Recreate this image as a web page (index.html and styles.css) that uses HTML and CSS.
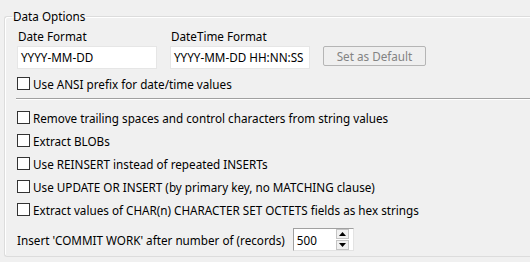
FILE: index.html
```html
<!DOCTYPE html>
<html lang="en">
<head>
    <meta charset="UTF-8">
    <title>Data Options</title>
    <link rel="stylesheet" href="styles.css">
</head>
<body>
    <fieldset class="group">
        <legend>Data Options</legend>

        <div class="format-row">
            <div class="field">
                <label class="field-label">Date Format</label>
                <div class="edit">YYYY-MM-DD</div>
            </div>
            <div class="field">
                <label class="field-label">DateTime Format</label>
                <div class="edit">YYYY-MM-DD HH:NN:SS</div>
            </div>
            <button class="push-button" disabled>Set as Default</button>
        </div>

        <div class="check-row"><span class="check"></span>Use ANSI prefix for date/time values</div>

        <div class="separator"></div>

        <div class="check-list">
            <div class="check-row"><span class="check"></span>Remove trailing spaces and control characters from string values</div>
            <div class="check-row"><span class="check"></span>Extract BLOBs</div>
            <div class="check-row"><span class="check"></span>Use REINSERT instead of repeated INSERTs</div>
            <div class="check-row"><span class="check"></span>Use UPDATE OR INSERT (by primary key, no MATCHING clause)</div>
            <div class="check-row"><span class="check"></span>Extract values of CHAR(n) CHARACTER SET OCTETS fields as hex strings</div>
        </div>

        <div class="commit-row">
            <span>Insert 'COMMIT WORK' after number of (records)</span>
            <div class="spin">
                <span class="spin-value">500</span>
                <div class="spin-buttons">
                    <span class="spin-btn"><svg width="7" height="4" viewBox="0 0 7 4"><path d="M3.5 0L7 4H0z" fill="#000"/></svg></span>
                    <span class="spin-btn"><svg width="7" height="4" viewBox="0 0 7 4"><path d="M0 0H7L3.5 4z" fill="#000"/></svg></span>
                </div>
            </div>
        </div>
    </fieldset>
</body>
</html>
```

FILE: styles.css
```css
body {
    margin: 0;
    padding: 0;
    background: #f0f0f0;
    font-family: "Noto Sans", "Open Sans", sans-serif;
    font-size: 11.7px;
    color: #000;
    overflow: hidden;
}

.group {
    margin: 8px 0 0 4px;
    padding: 4px 0 5px 13px;
    border: 1px solid #dcdcdc;
    border-right: none;
    border-radius: 3px 0 0 3px;
    box-shadow: inset 1px 1px 0 #fff;
    min-width: 0;
}

.group legend {
    margin-left: -6px;
    padding: 0 1px;
    line-height: 16px;
}

.format-row {
    display: flex;
    align-items: flex-end;
    gap: 13px;
    margin-left: -1px;
}

.field {
    display: flex;
    flex-direction: column;
    gap: 2px;
}

.field-label {
    line-height: 16px;
    padding-left: 1px;
}

.edit {
    width: 135px;
    height: 21px;
    line-height: 21px;
    padding-left: 3px;
    background: #fff;
    border: 1px solid #e6e6e6;
    white-space: nowrap;
    overflow: hidden;
}

.push-button {
    width: 103px;
    height: 20px;
    margin-bottom: 3px;
    padding: 0;
    font: inherit;
    color: #838383;
    background: #efefef;
    border: 1px solid #b5b5b5;
    border-radius: 2px;
}

.check-row {
    display: flex;
    align-items: center;
    gap: 3px;
    height: 23px;
    margin-left: -1px;
}

.format-row + .check-row {
    margin-top: 3px;
}

.check {
    width: 11px;
    height: 11px;
    background: #fff;
    border: 1px solid #333;
}

.separator {
    margin: 3px 0 6px -2px;
    height: 1px;
    background: #a0a0a0;
    border-bottom: 1px solid #fff;
}

.commit-row {
    display: flex;
    align-items: center;
    gap: 8px;
    height: 23px;
    margin: 7px 0 0 -1px;
}

.spin {
    display: flex;
    align-items: center;
    justify-content: space-between;
    width: 52px;
    height: 19px;
    padding: 1px 4px 1px 3px;
    background: #fff;
    border-top: 1px solid #a0a0a0;
    border-left: 1px solid #a0a0a0;
    border-right: 1px solid #e3e3e3;
    border-bottom: 1px solid #e3e3e3;
}

.spin-buttons {
    display: flex;
    flex-direction: column;
    gap: 1px;
}

.spin-btn {
    display: flex;
    align-items: center;
    justify-content: center;
    width: 11px;
    height: 8px;
    background: #f0f0f0;
    border: 1px solid #c4c4c4;
}
```
